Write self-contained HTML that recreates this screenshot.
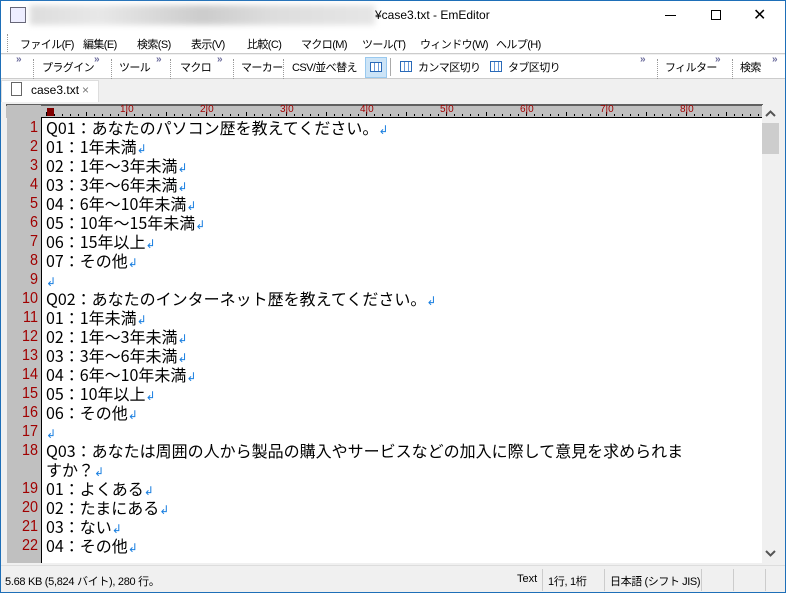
<!DOCTYPE html>
<html><head><meta charset="utf-8"><style>
*{margin:0;padding:0;box-sizing:border-box}
body{width:786px;height:593px;overflow:hidden;background:#f0f0f0;font-family:"Liberation Sans","Noto Sans CJK JP",sans-serif;font-size:12px;color:#000;position:relative}
.abs{position:absolute}
#win{position:absolute;left:0;top:0;width:786px;height:593px;border:1px solid #1e6fb8}
#title{left:1px;top:1px;width:784px;height:30px;background:#fff}
.menu span,.tb span{position:absolute;font-size:11px;letter-spacing:-0.6px;white-space:nowrap}
.menu span{top:36px}
.tb span{top:59px}
.tb span.chev{font-size:10px;color:#6a6a9a;font-weight:bold;letter-spacing:-2px;top:54px}
.sep{position:absolute;top:57px;height:20px;border-left:1px dotted #999}
#edit{left:42px;top:118px;width:720px;height:445px;background:#fff;overflow:hidden}
#gut{left:7px;top:105px;width:34px;height:458px;background:#c0c0c0}
.ln{position:absolute;left:7px;width:31px;text-align:right;color:#a00000;font-size:16px;line-height:19px;font-family:"Liberation Sans",sans-serif;transform:scaleX(0.9);transform-origin:right}
.tx{position:absolute;left:46px;font-size:16px;font-family:"Noto Sans CJK JP",sans-serif;white-space:pre;line-height:19px}
.r{color:#1a7fe0;font-size:12px}
.tk{position:absolute;width:1px;background:#000}
.rn{position:absolute;top:104px;font-size:10px;color:#a00000;font-family:"Liberation Sans",sans-serif}
</style></head><body>
<div id="win"></div>
<div class="abs" id="title"></div>
<div class="abs" style="left:10px;top:7px;width:16px;height:16px;border:1px solid #667;background:#eef"></div>
<div class="abs" style="left:30px;top:5px;width:345px;height:20px;background:linear-gradient(90deg,#ddd,#e8e8e8 20%,#ccc 50%,#ddd 70%,#e6e6e6);filter:blur(3px)"></div>
<div class="abs" style="left:375px;top:8px;font-size:12px">¥case3.txt - EmEditor</div>
<div class="abs" style="left:665px;top:15px;width:11px;height:1px;background:#000"></div>
<div class="abs" style="left:711px;top:10px;width:10px;height:10px;border:1px solid #000"></div>
<div class="abs" style="left:753px;top:5px;font-size:16px">✕</div>
<div class="abs" style="left:1px;top:31px;width:784px;height:23px;background:#fff;border-bottom:1px solid #ccc"></div>
<div class="abs" style="left:7px;top:34px;height:18px;border-left:1px dotted #999"></div>
<div class="menu">
<span style="left:20px">ファイル(F)</span><span style="left:83px">編集(E)</span><span style="left:137px">検索(S)</span><span style="left:191px">表示(V)</span><span style="left:247px">比較(C)</span><span style="left:301px">マクロ(M)</span><span style="left:362px">ツール(T)</span><span style="left:420px">ウィンドウ(W)</span><span style="left:496px">ヘルプ(H)</span>
</div>
<div class="abs" style="left:1px;top:55px;width:784px;height:24px;background:#fff;border-bottom:1px solid #ccc"></div>
<div class="tb">
<span class="chev" style="left:16px">»</span>
<span class="sep" style="left:33px"></span>
<span style="left:42px">プラグイン</span><span class="chev" style="left:94px">»</span>
<span class="sep" style="left:111px"></span>
<span style="left:119px">ツール</span><span class="chev" style="left:156px">»</span>
<span class="sep" style="left:170px"></span>
<span style="left:180px">マクロ</span><span class="chev" style="left:217px">»</span>
<span class="sep" style="left:233px"></span>
<span style="left:241px">マーカー</span>
<span class="sep" style="left:283px"></span>
<span style="left:292px">CSV/並べ替え</span>
</div>
<div class="abs" style="left:365px;top:57px;width:22px;height:21px;background:#cce4f7;border:1px solid #99c9ef"></div>
<div class="abs" style="left:370px;top:62px;width:12px;height:10px;border:1px solid #2a6ab8;background:repeating-linear-gradient(90deg,#fff 0 3px,#6a9ad8 3px 4px)"></div>
<div class="abs" style="left:390px;top:58px;height:18px;border-left:1px solid #aaa"></div>
<div class="abs" style="left:400px;top:61px;width:12px;height:11px;border:1px solid #2a6ab8;background:repeating-linear-gradient(90deg,#fff 0 3px,#6a9ad8 3px 4px)"></div>
<div class="abs" style="left:490px;top:61px;width:12px;height:11px;border:1px solid #2a6ab8;background:repeating-linear-gradient(90deg,#fff 0 3px,#6a9ad8 3px 4px)"></div>
<div class="tb">
<span style="left:418px">カンマ区切り</span><span style="left:508px">タブ区切り</span>
<span class="chev" style="left:640px">»</span>
<span class="sep" style="left:657px"></span>
<span style="left:665px">フィルター</span><span class="chev" style="left:715px">»</span>
<span class="sep" style="left:732px"></span>
<span style="left:740px">検索</span><span class="chev" style="left:772px">»</span>
</div>
<div class="abs" style="left:1px;top:80px;width:98px;height:22px;background:#fff;border:1px solid #ddd;border-bottom:none"></div>
<div class="abs" style="left:11px;top:82px;width:11px;height:14px;border:1px solid #666;background:#fff"></div>
<div class="abs" style="left:31px;top:83px;font-size:12px">case3.txt</div>
<div class="abs" style="left:82px;top:83px;font-size:12px;color:#777">×</div>
<div class="abs" style="left:6px;top:104px;width:757px;height:14px;background:#c0c0c0;border-top:2px solid #606060"></div>
<div class="abs" style="left:47px;top:108px;width:7px;height:8px;background:#800000"></div>
<div id="ruler"></div>
<div class="abs" id="gut"></div>
<div class="abs" style="left:41px;top:117px;width:1px;height:446px;background:#000"></div>
<div class="abs" style="left:42px;top:117px;width:720px;height:1px;background:#000"></div>
<div class="abs" id="edit"></div>
<div id="content"></div>
<div class="abs" style="left:762px;top:105px;width:17px;height:458px;background:#f0f0f0"></div>
<div class="abs" style="left:762px;top:123px;width:17px;height:31px;background:#cdcdcd"></div>
<svg class="abs" style="left:762px;top:108px" width="17" height="12"><path d="M4 8 L8.5 3.5 L13 8" stroke="#555" stroke-width="2" fill="none"/></svg>
<svg class="abs" style="left:762px;top:547px" width="17" height="12"><path d="M4 4 L8.5 8.5 L13 4" stroke="#555" stroke-width="2" fill="none"/></svg>
<div class="abs" style="left:1px;top:565px;width:784px;height:1px;background:#ddd"></div>
<div class="abs" style="left:5px;top:573px;font-size:11px;letter-spacing:-0.3px">5.68 KB (5,824 バイト), 280 行。</div>
<div class="abs" style="left:517px;top:573px;font-size:11px">Text</div>
<div class="abs" style="left:542px;top:569px;height:22px;border-left:1px solid #ccc"></div>
<div class="abs" style="left:548px;top:573px;font-size:11px;letter-spacing:-0.3px">1行, 1桁</div>
<div class="abs" style="left:604px;top:569px;height:22px;border-left:1px solid #ccc"></div>
<div class="abs" style="left:610px;top:573px;font-size:11px;letter-spacing:-0.4px">日本語 (シフト JIS)</div>
<div class="abs" style="left:701px;top:569px;height:22px;border-left:1px solid #ccc"></div>
<div class="abs" style="left:733px;top:569px;height:22px;border-left:1px solid #ccc"></div>
<div class="abs" style="left:765px;top:569px;height:22px;border-left:1px solid #ccc"></div>
<script>
var r=document.getElementById('ruler'),h='';
for(var i=0;i<90;i++){var x=46+i*8;if(x>760)break;var big=i%5==0;h+='<div class="tk" style="left:'+x+'px;height:'+(big?4:2)+'px;top:'+(big?112:114)+'px"></div>';if(i%10==0&&i>0)h+='<div class="rn" style="left:'+(x-6)+'px">'+(i/10)+'|0</div>';}
r.innerHTML=h;
var L=[[1,"Q01：あなたのパソコン歴を教えてください。"],[2,"01：1年未満"],[3,"02：1年～3年未満"],[4,"03：3年～6年未満"],[5,"04：6年～10年未満"],[6,"05：10年～15年未満"],[7,"06：15年以上"],[8,"07：その他"],[9,""],[10,"Q02：あなたのインターネット歴を教えてください。"],[11,"01：1年未満"],[12,"02：1年～3年未満"],[13,"03：3年～6年未満"],[14,"04：6年～10年未満"],[15,"05：10年以上"],[16,"06：その他"],[17,""],[18,"Q03：あなたは周囲の人から製品の購入やサービスなどの加入に際して意見を求められま",1],[0,"すか？"],[19,"01：よくある"],[20,"02：たまにある"],[21,"03：ない"],[22,"04：その他"],[23,""]];
var c='';
for(var k=0;k<L.length;k++){var y=118+k*19;if(y>548)break;
if(L[k][0])c+='<div class="ln" style="top:'+y+'px">'+L[k][0]+'</div>';
c+='<div class="tx" style="top:'+y+'px">'+L[k][1]+(L[k][2]?'':'<span class="r">↲</span>')+'</div>';}
var d=document.getElementById('content');d.innerHTML=c;d.style.cssText='position:absolute;left:0;top:0;width:762px;height:563px;overflow:hidden';
</script>
</body></html>
